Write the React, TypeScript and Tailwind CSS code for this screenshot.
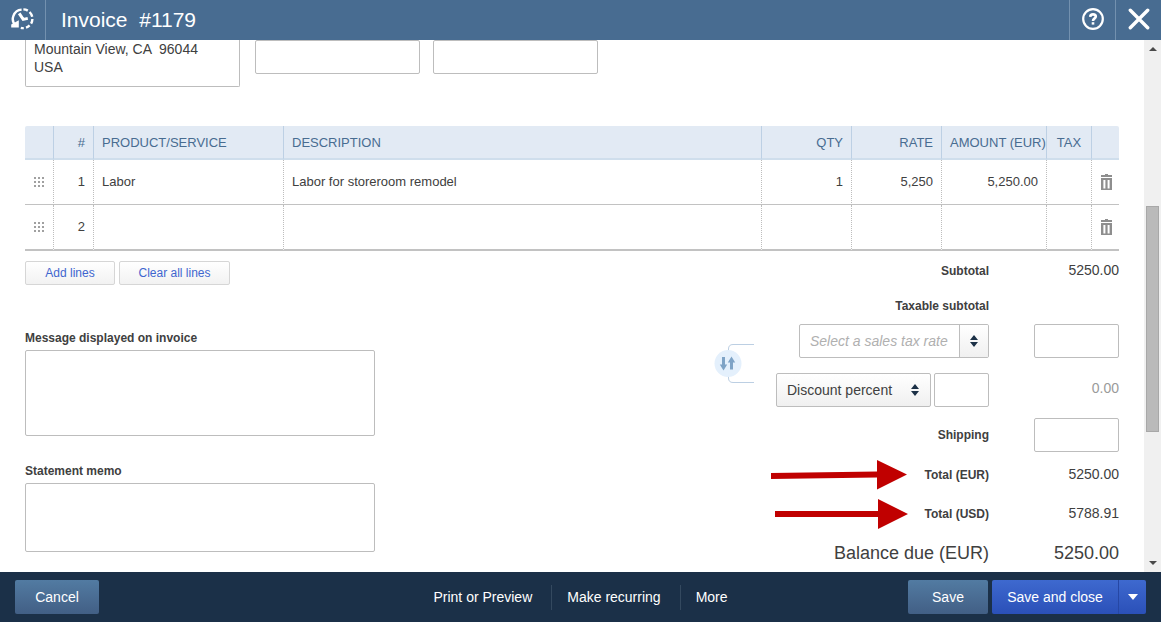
import { useState } from 'react';
import type { ReactNode } from 'react';

type Line = {
  id: number;
  product: string;
  description: string;
  qty: string;
  rate: string;
  amount: string;
};

const initialLines: Line[] = [
  { id: 1, product: 'Labor', description: 'Labor for storeroom remodel', qty: '1', rate: '5,250', amount: '5,250.00' },
  { id: 2, product: '', description: '', qty: '', rate: '', amount: '' },
];

const boxClass = 'block rounded-xs border border-[#bdbdbd] bg-white outline-none';
const thClass = 'border-r border-b-2 border-r-[#bdd0e4] border-b-[#cfdeec] px-2 pt-px font-normal';
const tdClass = 'border-r border-b border-r-[#bdbdbd] border-b-[#c2c2c2] px-2 [border-right-style:dotted] group-last:border-b-2';

function HistoryIcon() {
  return (
    <svg width="24" height="24" viewBox="0 0 24 24" fill="none" stroke="white" strokeWidth="2.4">
      <path d="M4.8 18.8A9.4 9.4 0 0 1 10.6 2.6" />
      <path d="M12.4 2.4A9.4 9.4 0 0 1 16.8 3.6M18.6 5A9.4 9.4 0 0 1 21.2 9.8M21.4 12A9.4 9.4 0 0 1 20.1 16.6M18.6 18.4A9.4 9.4 0 0 1 15 20.6M12.8 21.1A9.4 9.4 0 0 1 9.8 20.9" />
      <path d="M8.2 6.4L12.2 12.4L16.8 11.4" strokeWidth="3" />
      <path d="M0.2 17.4V20.6H7.8V13.2Z" fill="white" stroke="none" />
    </svg>
  );
}

function HelpIcon() {
  return (
    <svg width="22" height="22" viewBox="0 0 22 22" fill="none" stroke="white">
      <circle cx="11" cy="11" r="9.8" strokeWidth="2.2" />
      <path d="M8.2 8.8C8.3 7.2 9.4 6.4 11 6.4C12.7 6.4 13.8 7.2 13.8 8.6C13.8 10.4 11 10.4 11 13" strokeWidth="2.6" />
      <path d="M9.7 14.2H12.3V16.6H9.7Z" fill="white" stroke="none" />
    </svg>
  );
}

function CloseIcon() {
  return (
    <svg width="22" height="22" viewBox="0 0 22 22" stroke="white" strokeWidth="3.4" strokeLinecap="round">
      <path d="M2.3 2.3L19.7 19.7M19.7 2.3L2.3 19.7" />
    </svg>
  );
}

function GripIcon() {
  return (
    <svg width="10" height="10" viewBox="0 0 10 10" fill="#a0a0a0" className="mx-auto">
      {[0, 4, 8].map((y) => [0, 4, 8].map((x) => <rect key={`${x}-${y}`} x={x} y={y} width="2" height="2" />))}
    </svg>
  );
}

function TrashIcon() {
  return (
    <svg width="11" height="16" viewBox="0 0 11 16" fill="#8e8e8e">
      <path d="M4 0H7V1H11V3H0V1H4Z" />
      <path fillRule="evenodd" d="M0 4H11V16H0ZM2.4 6V14.4H4.4V6ZM6.6 6V14.4H8.6V6Z" />
    </svg>
  );
}

function UpDownIcon() {
  return (
    <svg width="8" height="12" viewBox="0 0 8 12" fill="#1c3147">
      <path d="M4 0L8 5H0ZM0 7H8L4 12Z" />
    </svg>
  );
}

function SwapIcon() {
  return (
    <svg width="40" height="41" viewBox="0 0 40 41">
      <path d="M40 1.5H19Q14.5 1.5 14.5 6V35Q14.5 39.5 19 39.5H40" fill="none" stroke="#bccfe3" />
      <circle cx="14" cy="20.5" r="13.5" fill="#e4f0fc" />
      <path d="M8 14H11V21.5H13.2L9.5 27.5L5.8 21.5H8ZM16 26.5H19V19.5H21.2L17.5 13.5L13.8 19.5H16Z" fill="#7ea3c6" />
    </svg>
  );
}

function Pointer({ slanted }: { slanted?: boolean }) {
  return (
    <svg width="138" height="30" viewBox="0 0 138 30" fill="#c00000" className="mr-[17px] shrink-0">
      {slanted ? (
        <path d="M1 13L107 11.5V0L137 14.5L107 29.5V17.5L1 19Z" />
      ) : (
        <path d="M5 12H108V0L138 15L108 30V18H5Z" />
      )}
    </svg>
  );
}

function TotalRow({ label, value, children }: { label: string; value: string; children?: ReactNode }) {
  return (
    <div className="flex h-[39px] items-center justify-end">
      {children}
      <span className="text-[12px] font-bold whitespace-nowrap">{label}</span>
      <output className="w-[130px] shrink-0 text-right text-[14px]">{value}</output>
    </div>
  );
}

function ScrollRail() {
  return (
    <div className="flex w-[17px] shrink-0 flex-col items-center bg-[#f0f0f0] py-[7px]" aria-hidden="true">
      <svg width="8" height="4" fill="#4a4a4a"><path d="M4 0L8 4H0Z" /></svg>
      <div className="grow-[156]" />
      <div className="w-[13px] grow-[226] border border-[#a8a8a8] bg-[#bababa]" />
      <div className="grow-[130]" />
      <svg width="8" height="4" fill="#4a4a4a"><path d="M0 0H8L4 4Z" /></svg>
    </div>
  );
}

export default function App() {
  const [lines, setLines] = useState(initialLines);

  const addLine = () =>
    setLines([...lines, { id: lines.length + 1, product: '', description: '', qty: '', rate: '', amount: '' }]);
  const clearLines = () =>
    setLines(lines.map((line) => ({ ...line, product: '', description: '', qty: '', rate: '', amount: '' })));
  const removeLine = (id: number) => setLines(lines.filter((line) => line.id !== id));

  return (
    <div className="flex h-screen flex-col bg-white font-['Liberation_Sans',Arial,sans-serif] text-[#404040]">
      <header className="flex h-10 shrink-0 items-stretch bg-[#486c91] text-white">
        <button aria-label="Recent invoices" className="flex w-[46px] items-center justify-center border-r border-[#7391af] pb-[3px]">
          <HistoryIcon />
        </button>
        <h1 className="flex-1 pl-[15px] text-[21px] leading-[39px] whitespace-pre">Invoice  #1179</h1>
        <button aria-label="Help" className="flex w-[46px] items-center justify-center border-l border-[#7391af] pb-[3px]">
          <HelpIcon />
        </button>
        <button aria-label="Close" className="flex w-[46px] items-center justify-center border-l border-[#7391af] pb-[3px]">
          <CloseIcon />
        </button>
      </header>

      <div className="flex min-h-0 flex-1">
        <main className="min-w-0 flex-1 overflow-hidden px-[25px]">
          <div className="flex items-start">
            <textarea
              aria-label="Billing address"
              className="block h-[47px] w-[215px] resize-none overflow-hidden rounded-b-xs border border-t-0 border-[#bdbdbd] px-2 text-[14px] leading-[18px] outline-none"
              defaultValue={'Mountain View, CA  96044\nUSA'}
            />
            <input aria-label="Invoice date" className={`${boxClass} ml-[15px] h-[34px] w-[165px] px-2`} />
            <input aria-label="Due date" className={`${boxClass} ml-[13px] h-[34px] w-[165px] px-2`} />
          </div>

          <table className="mt-[39px] w-full table-fixed border-separate border-spacing-0 text-[13px]">
            <colgroup>
              <col className="w-[29px]" />
              <col className="w-10" />
              <col className="w-[190px]" />
              <col />
              <col className="w-[90px]" />
              <col className="w-[90px]" />
              <col className="w-[105px]" />
              <col className="w-[45px]" />
              <col className="w-[27px]" />
            </colgroup>
            <thead>
              <tr className="h-[34px] bg-[#e2eaf4] text-[#486c91]">
                <th className={`${thClass} rounded-tl-xs`} aria-label="Reorder" />
                <th className={`${thClass} text-right`}>#</th>
                <th className={`${thClass} text-left`}>PRODUCT/SERVICE</th>
                <th className={`${thClass} text-left`}>DESCRIPTION</th>
                <th className={`${thClass} text-right`}>QTY</th>
                <th className={`${thClass} text-right`}>RATE</th>
                <th className={`${thClass} text-left whitespace-nowrap`}>AMOUNT (EUR)</th>
                <th className={`${thClass} text-center`}>TAX</th>
                <th className="rounded-tr-xs border-b-2 border-[#cfdeec]" aria-label="Delete" />
              </tr>
            </thead>
            <tbody>
              {lines.map((line) => (
                <tr key={line.id} className="group h-[45px] last:h-[46px]">
                  <td className={tdClass}><GripIcon /></td>
                  <td className={`${tdClass} text-right`}>{line.id}</td>
                  <td className={tdClass}>{line.product}</td>
                  <td className={tdClass}>{line.description}</td>
                  <td className={`${tdClass} text-right`}>{line.qty}</td>
                  <td className={`${tdClass} text-right`}>{line.rate}</td>
                  <td className={`${tdClass} text-right`}>{line.amount}</td>
                  <td className={tdClass} />
                  <td className="border-b border-[#c2c2c2] pl-[9px] group-last:border-b-2">
                    <button className="block" aria-label={`Delete line ${line.id}`} onClick={() => removeLine(line.id)}>
                      <TrashIcon />
                    </button>
                  </td>
                </tr>
              ))}
            </tbody>
          </table>

          <div className="flex items-start">
            <section className="w-[350px] pt-[10px]">
              <div className="flex gap-1">
                <button onClick={addLine} className="h-6 w-[90px] rounded-xs border border-[#d6d6d6] bg-linear-to-b from-white to-[#f2f2f2] text-[12px] text-[#3f66cf]">
                  Add lines
                </button>
                <button onClick={clearLines} className="h-6 w-[111px] rounded-xs border border-[#d6d6d6] bg-linear-to-b from-white to-[#f2f2f2] text-[12px] text-[#3f66cf]">
                  Clear all lines
                </button>
              </div>
              <label htmlFor="message" className="mt-[45px] block text-[12px] leading-4 font-bold">
                Message displayed on invoice
              </label>
              <textarea id="message" className={`${boxClass} mt-1 h-[86px] w-full resize-none p-2 text-[13px]`} />
              <label htmlFor="memo" className="mt-[27px] block text-[12px] leading-4 font-bold">
                Statement memo
              </label>
              <textarea id="memo" className={`${boxClass} mt-1 h-[69px] w-full resize-none p-2 text-[13px]`} />
            </section>

            <button aria-label="Swap tax and discount order" className="mt-[92px] mr-4 ml-auto">
              <SwapIcon />
            </button>

            <section className="w-[349px] shrink-0">
              <div className="-mb-[2px]">
                <TotalRow label="Subtotal" value="5250.00" />
              </div>
              <div className="flex h-9 items-center justify-end pr-[130px] text-[12px] font-bold">Taxable subtotal</div>
              <div className="flex justify-end">
                <div className="flex h-[34px] w-[190px] overflow-hidden rounded-xs border border-[#bdbdbd]">
                  <input
                    aria-label="Sales tax rate"
                    placeholder="Select a sales tax rate"
                    className="min-w-0 flex-1 pl-[10px] text-[14px] outline-none placeholder:text-[#b0b0b0] placeholder:italic"
                  />
                  <button aria-label="Show tax rates" className="flex w-[29px] items-center justify-center border-l border-[#bdbdbd] bg-linear-to-b from-white to-[#f0f0f0]">
                    <UpDownIcon />
                  </button>
                </div>
                <input aria-label="Tax amount" className={`${boxClass} ml-[45px] h-[34px] w-[85px] px-2 text-right`} />
              </div>
              <div className="mt-[15px] flex items-center justify-end">
                <div className="grid w-[155px] items-center">
                  <select
                    aria-label="Discount type"
                    className="col-start-1 row-start-1 h-[34px] appearance-none rounded-xs border border-[#bdbdbd] bg-linear-to-b from-white to-[#f0f0f0] pl-[10px] text-[14px]"
                  >
                    <option>Discount percent</option>
                    <option>Discount value</option>
                  </select>
                  <span className="pointer-events-none col-start-1 row-start-1 mr-3 justify-self-end">
                    <UpDownIcon />
                  </span>
                </div>
                <input aria-label="Discount" className={`${boxClass} ml-[3px] h-[34px] w-[55px] px-2`} />
                <output className="w-[130px] pb-1 text-right text-[14px] text-[#9a9a9a]">0.00</output>
              </div>
              <div className="mt-[11px] mb-[3px] flex items-center justify-end">
                <label htmlFor="shipping" className="text-[12px] font-bold">Shipping</label>
                <input id="shipping" className={`${boxClass} ml-[45px] h-[34px] w-[85px] px-2 text-right`} />
              </div>
              <TotalRow label="Total (EUR)" value="5250.00">
                <Pointer slanted />
              </TotalRow>
              <TotalRow label="Total (USD)" value="5788.91">
                <Pointer />
              </TotalRow>
              <div className="flex h-10 items-center justify-end text-[18px]">
                <span>Balance due (EUR)</span>
                <output className="w-[130px] text-right">5250.00</output>
              </div>
            </section>
          </div>
        </main>
        <ScrollRail />
      </div>

      <footer className="grid h-[50px] shrink-0 grid-cols-[1fr_auto_1fr] items-center bg-[#1b3048] px-[15px] text-[14px] text-white">
        <button className="h-[34px] w-[84px] rounded-xs bg-linear-to-b from-[#527ba2] to-[#425f85]">Cancel</button>
        <nav className="flex h-[25px] items-center">
          <button className="pr-[19px]">Print or Preview</button>
          <button className="h-full border-x border-[#34495f] pr-[19px] pl-[15px]">Make recurring</button>
          <button className="pl-[15px]">More</button>
        </nav>
        <div className="flex justify-end">
          <button className="h-[34px] w-20 rounded-xs bg-linear-to-b from-[#527ba2] to-[#425f85]">Save</button>
          <button className="ml-1 h-[34px] w-[126px] rounded-l-xs bg-linear-to-b from-[#3e69cf] to-[#2b50b8]">Save and close</button>
          <button aria-label="More save options" className="flex h-[34px] w-7 items-center justify-center rounded-r-xs border-l border-[#2647a4] bg-linear-to-b from-[#3e69cf] to-[#2b50b8]">
            <svg width="10" height="6" fill="white"><path d="M0 0H10L5 6Z" /></svg>
          </button>
        </div>
      </footer>
    </div>
  );
}
